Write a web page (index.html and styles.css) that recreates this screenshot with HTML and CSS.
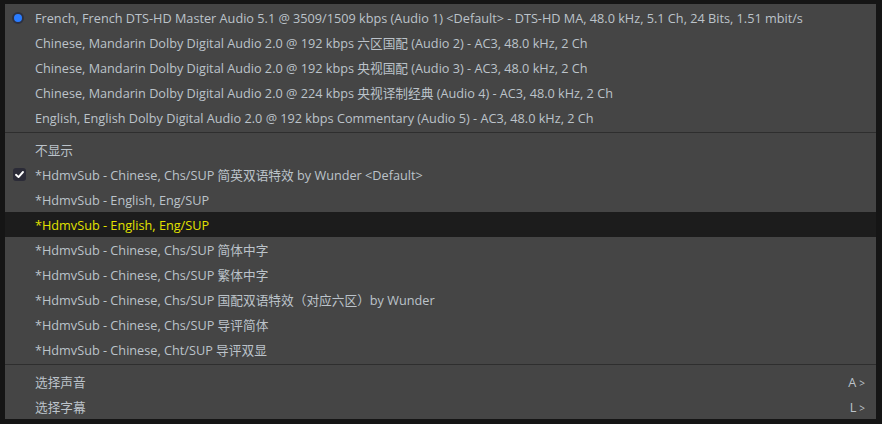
FILE: index.html
```html
<!DOCTYPE html>
<html lang="zh-CN">
<head>
    <meta charset="utf-8">
    <title>音轨与字幕菜单</title>
    <link rel="stylesheet" href="styles.css">
</head>
<body>
    <div class="menu">
        <div class="item"><span class="radio"></span><span class="label">French, French DTS-HD Master Audio 5.1 @ 3509/1509 kbps (Audio 1) &lt;Default&gt; - DTS-HD MA, 48.0 kHz, 5.1 Ch, 24 Bits, 1.51 mbit/s</span></div>
        <div class="item"><span></span><span class="label">Chinese, Mandarin Dolby Digital Audio 2.0 @ 192 kbps 六区国配 (Audio 2) - AC3, 48.0 kHz, 2 Ch</span></div>
        <div class="item"><span></span><span class="label">Chinese, Mandarin Dolby Digital Audio 2.0 @ 192 kbps 央视国配 (Audio 3) - AC3, 48.0 kHz, 2 Ch</span></div>
        <div class="item"><span></span><span class="label">Chinese, Mandarin Dolby Digital Audio 2.0 @ 224 kbps 央视译制经典 (Audio 4) - AC3, 48.0 kHz, 2 Ch</span></div>
        <div class="item"><span></span><span class="label">English, English Dolby Digital Audio 2.0 @ 192 kbps Commentary (Audio 5) - AC3, 48.0 kHz, 2 Ch</span></div>
        <div class="sep"></div>
        <div class="item"><span></span><span class="label">不显示</span></div>
        <div class="item"><span class="check"><svg width="13" height="13" viewBox="0 0 13 13"><path d="M3 6.8 L5.5 9.1 L10 4" fill="none" stroke="#fff" stroke-width="1.9" stroke-linecap="round" stroke-linejoin="round"/></svg></span><span class="label">*HdmvSub - Chinese, Chs/SUP 简英双语特效 by Wunder &lt;Default&gt;</span></div>
        <div class="item"><span></span><span class="label">*HdmvSub - English, Eng/SUP</span></div>
        <div class="item hover"><span></span><span class="label">*HdmvSub - English, Eng/SUP</span></div>
        <div class="item"><span></span><span class="label">*HdmvSub - Chinese, Chs/SUP 简体中字</span></div>
        <div class="item"><span></span><span class="label">*HdmvSub - Chinese, Chs/SUP 繁体中字</span></div>
        <div class="item"><span></span><span class="label">*HdmvSub - Chinese, Chs/SUP 国配双语特效（对应六区）by Wunder</span></div>
        <div class="item"><span></span><span class="label">*HdmvSub - Chinese, Chs/SUP 导评简体</span></div>
        <div class="item"><span></span><span class="label">*HdmvSub - Chinese, Cht/SUP 导评双显</span></div>
        <div class="sep"></div>
        <div class="item"><span></span><span class="label">选择声音</span><span class="key">A<i>&gt;</i></span></div>
        <div class="item"><span></span><span class="label">选择字幕</span><span class="key">L<i>&gt;</i></span></div>
    </div>
</body>
</html>
```

FILE: styles.css
```css
*{margin:0;padding:0;box-sizing:border-box;}
body{width:882px;height:424px;overflow:hidden;background:#151515;font-family:"Open Sans","Noto Sans CJK SC",sans-serif;font-size:12.7px;color:#bcc3ca;}

.menu{width:871px;height:415px;margin:4px 0 0 5px;padding-top:1px;background:#454545;}

.item{display:grid;grid-template-columns:30px 1fr auto;align-items:center;height:25px;white-space:nowrap;}
.item.hover{background:#1c1c1c;color:#e2e200;}
.key{padding-right:11px;}
.key i{font-style:normal;font-size:10px;margin-left:3px;}

.sep{height:1px;margin:2px 0 4px;background:#2e2e2e;}

.radio{width:12px;height:12px;margin-left:7px;border-radius:50%;background:#2a7cff;border:2px solid #2d3140;}
.check{display:block;width:13px;height:13px;margin-left:8px;border-radius:3px;background:#2b2b37;}
.check svg{display:block;}
```
